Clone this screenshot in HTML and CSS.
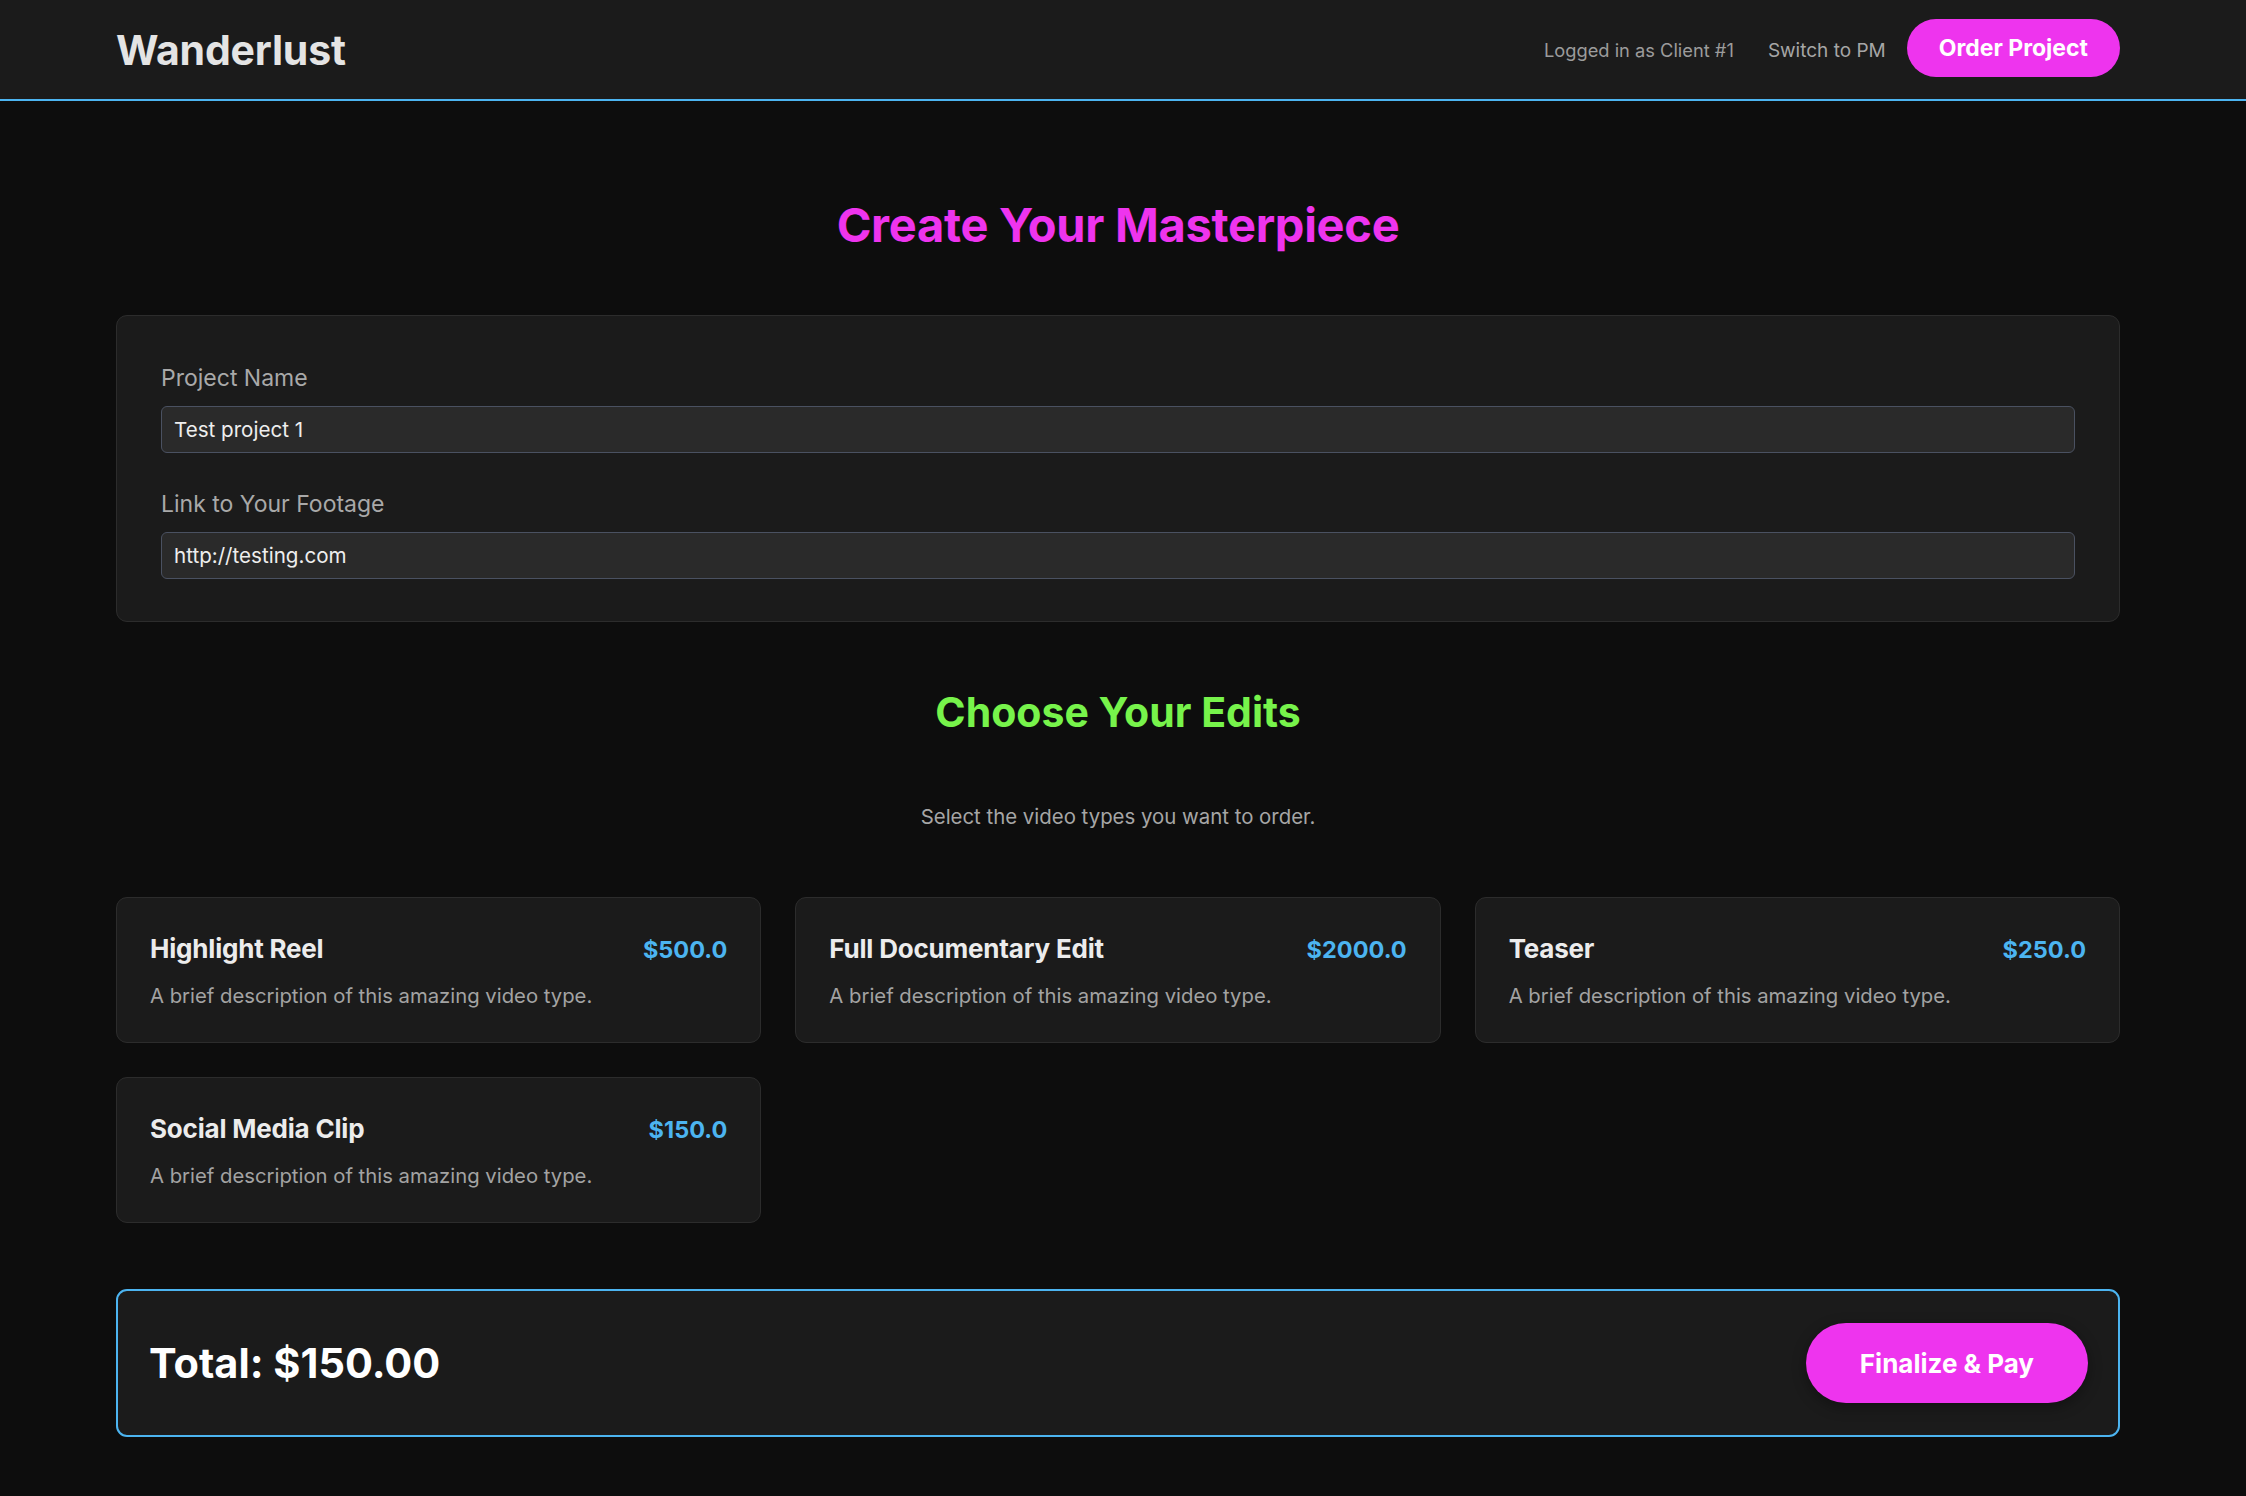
FILE: index.html
```html
<!DOCTYPE html>
<html lang="en">
<head>
<meta charset="utf-8">
<title>Wanderlust - Create Your Masterpiece</title>
<link rel="stylesheet" href="styles.css">
</head>
<body>
<header class="topbar">
  <div class="container topbar-inner">
    <div class="brand">Wanderlust</div>
    <nav class="user-nav">
      <span class="user-status">Logged in as Client #1</span>
      <a class="nav-link" href="#">Switch to PM</a>
      <a class="btn-pill btn-header" href="#">Order Project</a>
    </nav>
  </div>
</header>

<main class="container page">
  <h1 class="page-title">Create Your Masterpiece</h1>

  <section class="panel project-form">
    <div class="form-group">
      <label class="form-label" for="pname">Project Name</label>
      <input class="form-input" id="pname" type="text" value="Test project 1">
    </div>
    <div class="form-group last">
      <label class="form-label" for="plink">Link to Your Footage</label>
      <input class="form-input" id="plink" type="text" value="http://testing.com">
    </div>
  </section>

  <h2 class="section-title">Choose Your Edits</h2>
  <p class="section-subtitle">Select the video types you want to order.</p>

  <div class="edit-grid">
    <div class="edit-card">
      <div class="edit-head"><span class="edit-name">Highlight Reel</span><span class="edit-price">$500.0</span></div>
      <p class="edit-desc">A brief description of this amazing video type.</p>
    </div>
    <div class="edit-card">
      <div class="edit-head"><span class="edit-name">Full Documentary Edit</span><span class="edit-price">$2000.0</span></div>
      <p class="edit-desc">A brief description of this amazing video type.</p>
    </div>
    <div class="edit-card">
      <div class="edit-head"><span class="edit-name">Teaser</span><span class="edit-price">$250.0</span></div>
      <p class="edit-desc">A brief description of this amazing video type.</p>
    </div>
    <div class="edit-card">
      <div class="edit-head"><span class="edit-name">Social Media Clip</span><span class="edit-price">$150.0</span></div>
      <p class="edit-desc">A brief description of this amazing video type.</p>
    </div>
  </div>

  <div class="total-bar">
    <div class="total-amount">Total: $150.00</div>
    <a class="btn-pill btn-pay" href="#">Finalize &amp; Pay</a>
  </div>
</main>
</body>
</html>
```

FILE: styles.css
```css
* { box-sizing: border-box; }

html, body {
  margin: 0;
  padding: 0;
}

body {
  background: #0d0d0d;
  color: #e6e6e6;
  font-family: Inter, "Noto Sans", "Liberation Sans", sans-serif;
}

a { text-decoration: none; }

.container {
  width: 2004px;
  margin-left: 116px;
}

/* Header */
.topbar {
  background: #1b1b1b;
  height: 101px;
  border-bottom: 2px solid #4cb4f0;
}

.topbar-inner {
  height: 99px;
  display: flex;
  align-items: center;
  justify-content: space-between;
}

.brand {
  font-size: 41px;
  line-height: 48px;
  font-weight: 700;
  color: #e4e4e4;
  letter-spacing: -0.2px;
}

.user-nav {
  display: flex;
  align-items: center;
}

.user-status {
  font-size: 18.3px;
  color: #9c9c9c;
  margin-right: 34px;
}

.nav-link {
  font-size: 19px;
  color: #a6a6a6;
  font-weight: 400;
  margin-right: 21px;
  margin-top: 2px;
}

.btn-pill {
  display: inline-flex;
  align-items: center;
  justify-content: center;
  background: #ee34ee;
  color: #ffffff;
  font-weight: 700;
  border-radius: 999px;
}

.btn-header {
  height: 58px;
  padding: 0 32px;
  font-size: 23px;
  margin-bottom: 3px;
}

/* Page */
.page {
  padding-bottom: 60px;
}

.page-title {
  margin: 96px 0 62px;
  text-align: center;
  font-size: 47px;
  line-height: 56px;
  font-weight: 700;
  color: #ee34ee;
  letter-spacing: -0.3px;
}

.panel {
  background: #1b1b1b;
  border: 1px solid #2c2c2c;
  border-radius: 11px;
}

.project-form {
  padding: 45px 44px 42px;
}

.form-group {
  margin-bottom: 34px;
}

.form-group.last {
  margin-bottom: 0;
}

.form-label {
  display: block;
  font-size: 23px;
  line-height: 34px;
  color: #a9a9a9;
  margin-bottom: 11px;
}

.form-input {
  display: block;
  width: 100%;
  height: 47px;
  padding: 0 12px;
  background: #2a2a2a;
  border: 1px solid #4a5161;
  border-radius: 6px;
  color: #eeeeee;
  font-family: Inter, "Noto Sans", sans-serif;
  font-size: 20.6px;
  outline: none;
}

.section-title {
  margin: 66px 0 0;
  text-align: center;
  font-size: 41px;
  line-height: 48px;
  font-weight: 700;
  color: #77f34b;
}

.section-subtitle {
  margin: 66px 0 65px;
  text-align: center;
  font-size: 20.4px;
  line-height: 30px;
  color: #a6a6a6;
}

/* Edit cards */
.edit-grid {
  display: grid;
  grid-template-columns: repeat(3, 1fr);
  gap: 34px;
}

.edit-card {
  background: #1b1b1b;
  border: 1px solid #2c2c2c;
  border-radius: 11px;
  padding: 34px 33px 32px;
}

.edit-head {
  display: flex;
  justify-content: space-between;
  align-items: baseline;
  line-height: 34px;
}

.edit-name {
  font-size: 26px;
  font-weight: 700;
  color: #ececec;
  letter-spacing: -0.2px;
}

.edit-price {
  font-size: 23.5px;
  font-weight: 700;
  color: #4cb4f0;
}

.edit-desc {
  margin: 14px 0 0;
  font-size: 20.3px;
  line-height: 29px;
  color: #a3a3a3;
}

/* Total */
.total-bar {
  margin-top: 66px;
  background: #1b1b1b;
  border: 2px solid #4cb4f0;
  border-radius: 11px;
  padding: 32px 30px 32px 31px;
  display: flex;
  align-items: center;
  justify-content: space-between;
}

.total-amount {
  font-size: 41.5px;
  font-weight: 700;
  color: #ffffff;
}

.btn-pay {
  height: 80px;
  padding: 0 54px;
  font-size: 26px;
  box-shadow: 0 4px 14px rgba(0, 0, 0, 0.35);
}
```
